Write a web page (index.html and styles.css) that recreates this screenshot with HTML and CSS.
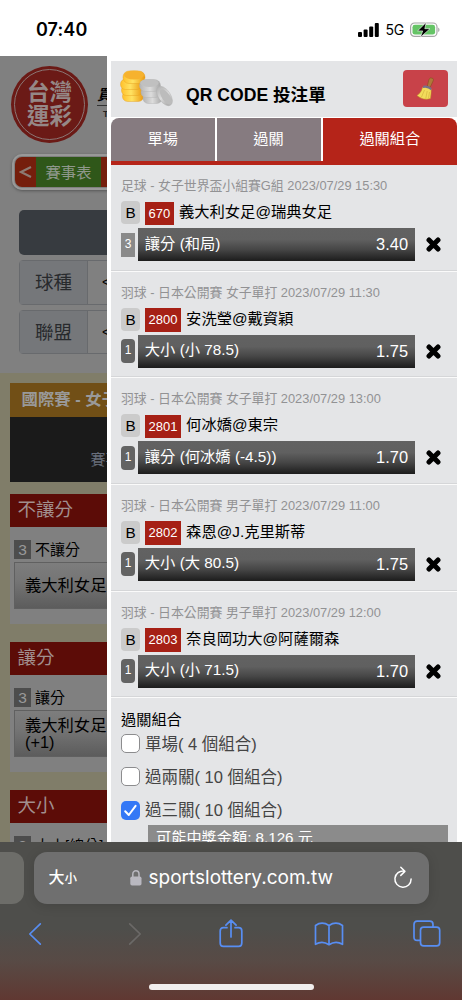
FILE: index.html
```html
<!DOCTYPE html>
<html lang="zh-Hant">
<head>
<meta charset="utf-8">
<title>QR CODE 投注單</title>
<link rel="stylesheet" href="styles.css">
</head>
<body>
<div class="phone">
  <header class="status">
    <span class="time">07:40</span>
    <span class="status-right">
      <svg class="signal" width="21" height="14" viewBox="0 0 21 14"><rect x="0" y="9" width="4" height="5" rx="1"/><rect x="5.6" y="6.4" width="4" height="7.6" rx="1"/><rect x="11.2" y="3.4" width="4" height="10.6" rx="1"/><rect x="16.8" y="0" width="4" height="14" rx="1"/></svg>
      <span class="net">5G</span>
      <svg class="battery" width="30" height="16" viewBox="0 0 30 16"><rect x=".6" y="1" width="26.4" height="13.4" rx="4" fill="#fff" stroke="#a6a6a6" stroke-width="1.2"/><rect x="2.5" y="2.8" width="22.6" height="9.8" rx="2.4" fill="#65c466"/><path d="M28.2 5.4v4.6q1.3-.6 1.3-2.3t-1.3-2.3z" fill="#a6a6a6"/><path d="M16.2.4 7.6 8.9h5.1L10.4 15.3 20 6.7h-5.2z" fill="#000" stroke="#fff" stroke-width=".6"/></svg>
    </span>
  </header>

  <main class="page">
    <aside class="behind">
      <div class="brand">
        <div class="logo"><div class="logo-ring"><span>台灣</span><span>運彩</span></div></div>
        <div class="tagline"><b>買</b><i>T</i></div>
      </div>
      <div class="nav"><span class="nav-arrow"><svg width="13" height="12" viewBox="0 0 13 12"><path d="M12 1 2 6l10 5" fill="none" stroke="#8c7b73" stroke-width="2.2"/></svg></span><span class="nav-item">賽事表</span><span class="nav-next"></span></div>
      <div class="dark-button"></div>
      <div class="field"><span>球種</span><em>&lt;</em></div>
      <div class="field"><span>聯盟</span><em>&lt;</em></div>
      <div class="games">
        <div class="gold">國際賽 - 女子</div>
        <div class="black">賽事</div>
        <section class="market">
          <h2>不讓分</h2>
          <div class="market-body"><p><b>3</b>不讓分</p><div class="pick">義大利女足</div></div>
        </section>
        <section class="market">
          <h2>讓分</h2>
          <div class="market-body"><p><b>3</b>讓分</p><div class="pick">義大利女足<br>(+1)</div></div>
        </section>
        <section class="market">
          <h2>大小</h2>
          <div class="market-body"><p><b>3</b>大小[總分]</p></div>
        </section>
      </div>
    </aside>

    <div class="slip">
      <div class="slip-head">
        <svg class="coins" width="54" height="40" viewBox="0 0 54 40">
          <defs>
            <linearGradient id="gold" x2="1"><stop offset="0" stop-color="#ffc02a"/><stop offset=".45" stop-color="#ffe262"/><stop offset="1" stop-color="#eb9a12"/></linearGradient>
            <linearGradient id="silver" x2="1"><stop offset="0" stop-color="#b4b4b4"/><stop offset=".5" stop-color="#dcdcdc"/><stop offset="1" stop-color="#a6a6a6"/></linearGradient>
          </defs>
          <g fill="url(#gold)" stroke="#e39c1c" stroke-width=".4">
            <rect x="2.5" y="23" width="21" height="10.5" rx="5"/><rect x="1.5" y="17" width="21" height="10.5" rx="5"/><rect x=".5" y="11" width="21.5" height="10.5" rx="5"/><rect x="3" y="3" width="22" height="12.5" rx="6"/><ellipse cx="14" cy="7" rx="10" ry="4.6" fill="#f6b22e" stroke="none"/>
          </g>
          <g fill="url(#silver)" stroke="#b0b0b0" stroke-width=".4">
            <rect x="23" y="25" width="19" height="10.5" rx="5"/><rect x="21" y="19" width="20" height="10.5" rx="5"/><rect x="19.5" y="11.5" width="21" height="12" rx="6"/><ellipse cx="29.5" cy="15" rx="9.2" ry="4" fill="#c0c0c0" stroke="none"/>
            <ellipse cx="44.5" cy="28" rx="11" ry="6" transform="rotate(56 44.5 28)"/><ellipse cx="46" cy="29" rx="9" ry="4" transform="rotate(56 46 29)" fill="#bcbcbc" stroke="none"/>
          </g>
        </svg>
        <h1>QR CODE 投注單</h1>
        <div class="clear"><svg width="19" height="24" viewBox="0 0 19 24"><path d="M11.3 9 13 2.2q1.4-2.2 3.8-.8 1 1 .4 2.4L14 10.6z" fill="#b0783a" stroke="#7c4a1c" stroke-width=".5"/><path d="M6.5 10.5q4-2.5 8.7 1.8 0 4.5-.8 9.3-7.4 2-13.4-3.1 4.6-3 5.5-8z" fill="#f2dc5b" stroke="#c39b29" stroke-width=".5"/><path d="M7.3 8.8q4.6-1.4 8.3 2.2l-.5 2.3q-4-3.8-8.4-2.2z" fill="#77708a"/><path d="M8.5 13 5.5 20M11.2 14 9.8 21.5M13.5 15l-1 6.3" stroke="#c9a535" stroke-width=".5"/></svg></div>
      </div>
      <nav class="tabs"><span>單場</span><span>過關</span><span class="active">過關組合</span></nav>

      <div class="bets">
        <article class="bet">
          <p class="event">足球 - 女子世界盃小組賽G組 2023/07/29 15:30</p>
          <div class="match"><b class="banker">B</b><span class="code">670</span><span>義大利女足@瑞典女足</span></div>
          <div class="line"><span class="min square">3</span><div class="odds"><span>讓分 (和局)</span><strong>3.40</strong></div><svg class="x" width="15" height="15" viewBox="0 0 15 15"><path d="M3 3l9 9M12 3l-9 9"/></svg></div>
        </article>
        <article class="bet">
          <p class="event">羽球 - 日本公開賽 女子單打 2023/07/29 11:30</p>
          <div class="match"><b class="banker">B</b><span class="code">2800</span><span>安洗瑩@戴資穎</span></div>
          <div class="line"><span class="min">1</span><div class="odds"><span>大小 (小 78.5)</span><strong>1.75</strong></div><svg class="x" width="15" height="15" viewBox="0 0 15 15"><path d="M3 3l9 9M12 3l-9 9"/></svg></div>
        </article>
        <article class="bet">
          <p class="event">羽球 - 日本公開賽 女子單打 2023/07/29 13:00</p>
          <div class="match"><b class="banker">B</b><span class="code">2801</span><span>何冰嬌@東宗</span></div>
          <div class="line"><span class="min">1</span><div class="odds"><span>讓分 (何冰嬌 (-4.5))</span><strong>1.70</strong></div><svg class="x" width="15" height="15" viewBox="0 0 15 15"><path d="M3 3l9 9M12 3l-9 9"/></svg></div>
        </article>
        <article class="bet">
          <p class="event">羽球 - 日本公開賽 男子單打 2023/07/29 11:00</p>
          <div class="match"><b class="banker">B</b><span class="code">2802</span><span>森恩@J.克里斯蒂</span></div>
          <div class="line"><span class="min">1</span><div class="odds"><span>大小 (大 80.5)</span><strong>1.75</strong></div><svg class="x" width="15" height="15" viewBox="0 0 15 15"><path d="M3 3l9 9M12 3l-9 9"/></svg></div>
        </article>
        <article class="bet">
          <p class="event">羽球 - 日本公開賽 男子單打 2023/07/29 12:00</p>
          <div class="match"><b class="banker">B</b><span class="code">2803</span><span>奈良岡功大@阿薩爾森</span></div>
          <div class="line"><span class="min">1</span><div class="odds"><span>大小 (小 71.5)</span><strong>1.70</strong></div><svg class="x" width="15" height="15" viewBox="0 0 15 15"><path d="M3 3l9 9M12 3l-9 9"/></svg></div>
        </article>
      </div>

      <div class="combos">
        <h3>過關組合</h3>
        <div class="combo"><i class="box"></i><span>單場( 4 個組合)</span></div>
        <div class="combo"><i class="box"></i><span>過兩關( 10 個組合)</span></div>
        <div class="combo"><i class="box on"><svg width="19" height="19" viewBox="0 0 19 19"><path d="M4.2 10.2 7.8 14 14.6 4.9" fill="none" stroke="#fff" stroke-width="2" stroke-linecap="round" stroke-linejoin="round"/></svg></i><span>過三關( 10 個組合)</span></div>
        <div class="payout">可能中獎金額: 8,126 元</div>
      </div>
    </div>
  </main>

  <footer class="safari">
    <div class="address-row">
      <div class="prev-tab"></div>
      <div class="address">
        <span class="aa">大<small>小</small></span>
        <span class="url"><svg width="12" height="16" viewBox="0 0 12 16"><rect x=".3" y="6.5" width="11.2" height="9" rx="1.8" fill="#b9b8c0"/><path d="M2.8 7V4.2a3.1 3.4 0 0 1 6.2 0V7" fill="none" stroke="#b9b8c0" stroke-width="1.5"/></svg>sportslottery.com.tw</span>
        <svg class="reload" width="20" height="23" viewBox="0 0 20 23"><path d="M11.3 5.1A8.1 8.1 0 1 0 18.1 13M7.8 1.3l4.1 4.1-4.1 4" fill="none" stroke="#fff" stroke-width="1.5" stroke-linecap="round" stroke-linejoin="round"/></svg>
      </div>
    </div>
    <div class="tools">
      <svg width="14" height="30" viewBox="0 0 14 30"><path d="M12.3 4.8 1.8 15l10.5 10.2"/></svg>
      <svg class="off" width="14" height="30" viewBox="0 0 14 30"><path d="M1.7 4.8 12.2 15 1.7 25.2"/></svg>
      <svg width="24" height="30" viewBox="0 0 24 30"><path d="M8 8.7H4.4Q1.2 8.7 1.2 12v12q0 3.4 3.2 3.4h15.2q3.2 0 3.2-3.4V12q0-3.3-3.2-3.3H16M12 18V1.3M6.9 6.2 12 1.1l5.1 5.1"/></svg>
      <svg width="30" height="30" viewBox="0 0 30 30"><path d="M15 25.7Q8.3 21.2 1.5 25.3V6.5q6.5-4.6 13.5 0 7-4.6 13.5 0v18.8Q21.7 21.2 15 25.7zM15 6.5v19"/></svg>
      <svg width="28" height="30" viewBox="0 0 28 30"><path d="M7.3 21.3H4.2Q1 21.3 1 18.2V5.4q0-3.2 3.2-3.2h12.6Q20 2.2 20 5.4v2.7"/><rect x="7.5" y="8.1" width="19.2" height="18.8" rx="3.2"/></svg>
    </div>
    <div class="home"></div>
  </footer>
</div>
</body>
</html>
```
FILE: styles.css
```css
* { box-sizing: border-box; margin: 0; padding: 0; }
body { font-family: "Liberation Sans", "Noto Sans CJK TC", sans-serif; background: #fff; color: #000; }
.phone { width: 462px; height: 1000px; overflow: hidden; display: grid; grid-template-rows: 56px 786px 158px; }

.status { display: flex; justify-content: space-between; padding: 3px 22px 0 36px; align-items: center; font-family: Inter, sans-serif; }
.time { font-size: 18px; font-weight: 600; letter-spacing: .1px; }
.status-right { display: flex; align-items: center; gap: 6px; }
.net { font-size: 14px; letter-spacing: -.2px; }

.page { display: grid; grid-template-columns: 107px 355px; overflow: hidden; }
.behind { background: #808080; overflow: hidden; height: 786px; white-space: nowrap; }
.brand { height: 98px; padding: 10px 0 0 11px; display: flex; }
.logo { flex: none; width: 77px; height: 77px; border-radius: 50%; background: #6b1a16; padding: 3px; }
.logo-ring { height: 71px; border: 1.5px solid #8a7674; border-radius: 50%; display: flex; flex-direction: column; align-items: center; justify-content: center; color: #958887; font-size: 22.5px; line-height: 23.5px; font-weight: 700; }
.tagline { flex: none; padding: 20px 0 0 9px; }
.tagline b { display: block; font-size: 15px; line-height: 18px; height: 20px; border-bottom: 1px solid #333; font-style: italic; }
.tagline i { display: block; font: 700 9px/12px "Liberation Sans", sans-serif; padding: 2px 0 0 6px; color: #222; }
.nav { margin-left: 12px; width: 160px; height: 36px; border: 2px solid #999; border-radius: 10px; padding: 1px; display: flex; overflow: hidden; box-shadow: 0 1px 3px #555; }
.nav-arrow { width: 21px; background: #751e0c; border-radius: 7px 0 0 7px; display: grid; place-items: center; }
.nav-item { width: 65px; background: #2f5719; color: #8f988c; font-size: 15.3px; display: grid; place-items: center; padding-bottom: 3px; }
.nav-next { flex: 1; background: #751e0c; }
.dark-button { margin: 20px 0 0 19px; width: 200px; height: 45px; border-radius: 5px; background: #373b40; }
.field { margin: 5px 0 0 19px; width: 200px; height: 44.5px; border: 1px solid #686a6d; border-radius: 4px; display: flex; align-items: center; }
.field span { width: 68px; height: 100%; display: grid; place-items: center; background: #75777a; border-right: 1px solid #686a6d; font-size: 18.5px; color: #282a2d; padding-bottom: 2px; }
.field em { font-style: normal; font-size: 14px; padding-left: 14px; }
.games { margin-top: 19px; padding: 10px 0 0 9.5px; background: #807d69; }
.gold { height: 34px; background: #714f16; color: #999; font-size: 16.4px; font-weight: 700; line-height: 33px; padding-left: 12px; }
.black { height: 64.5px; background: #1a1a1a; color: #686e7b; font-size: 15px; line-height: 22px; padding: 32px 0 0 81px; margin-bottom: 12px; }
.market { height: 148px; }
.market h2 { background: #5c0c07; height: 33px; line-height: 31px; padding-left: 8px; font-size: 18.5px; font-weight: 400; color: #a18f8e; }
.market-body { height: 97px; padding: 13px 0 0 4.5px; background: #808080; }
.market-body p { display: flex; align-items: center; height: 19px; line-height: 17px; gap: 4px; font-size: 15px; }
.market-body p b { width: 17px; height: 19px; background: #4d4d4d; color: #999; font-weight: 400; font-size: 15.5px; line-height: 19px; text-align: center; }
.pick { margin-top: 3.5px; height: 47px; width: 200px; border: 1.5px solid #606060; background: linear-gradient(#7d7d7d, #757575 40%, #5c5c5c); padding-left: 10px; font-size: 16.3px; line-height: 17px; display: flex; align-items: center; }

.slip { background: #fff; padding: 4.5px 5px 0 4px; overflow: hidden; height: 786px; white-space: nowrap; }
.slip-head { height: 56px; background: #e4e5e7; display: flex; padding-left: 9px; }
.coins { margin-top: 7px; }
.slip-head h1 { font-size: 17.6px; line-height: 26px; margin: 21px 0 0 12px; }
.clear { margin: 9.5px 9px 0 auto; width: 45px; height: 37px; border-radius: 4px; background: #c84249; display: grid; place-items: center; }
.tabs { margin-top: 1.5px; height: 47px; display: grid; grid-template-columns: 103.5px 104px 1fr; gap: 2px; border-bottom: 4.5px solid #b52419; border-radius: 8px 8px 0 0; overflow: hidden; }
.tabs span { background: #867b80; color: #fff; font-size: 15.2px; line-height: 41px; text-align: center; }
.tabs .active { background: #b52419; }

.bet { height: 106.65px; background: #e4e5e7; border-bottom: 1.5px solid #fafafa; box-shadow: inset 0 -1px #d5d6d8; padding: 11px 10px 0; }
.event { font-size: 12.85px; line-height: 19px; height: 25px; color: #929294; }
.match { display: flex; height: 27px; font-size: 15.3px; line-height: 22px; }
.banker { width: 19px; height: 23px; border-radius: 4px; background: #cbcbcb; font-weight: 400; text-align: center; line-height: 23px; margin-right: 5px; }
.code { height: 23.5px; margin: .5px 5px 0 0; background: #a62015; color: #fff; font-size: 13px; line-height: 23px; padding: 0 3.6px; }
.line { display: flex; align-items: center; height: 33px; }
.min { width: 14px; height: 24px; border-radius: 4px; background: #636363; color: #fff; text-align: center; font-size: 12px; line-height: 23px; margin-right: 2.5px; }
.square { border-radius: 0; background: #8a8a8a; }
.odds { width: 277.5px; height: 33px; background: linear-gradient(#626262 0, #606060 35%, #464646 65%, #1c1c1c); color: #fff; display: flex; align-items: center; justify-content: space-between; padding: 0 7px 0 7.3px; font-size: 15.3px; }
.odds > span { line-height: 22px; margin-top: -2px; }
.odds strong { font-weight: 400; font-size: 16.4px; }
.x { margin-left: 11px; stroke: #000; stroke-width: 5; stroke-linecap: round; }

.combos { background: #e4e5e7; padding: 12px 9px 0 10px; height: 160px; }
.combos h3 { font-size: 15.2px; font-weight: 400; line-height: 20px; height: 24px; }
.combo { display: flex; align-items: center; gap: 5px; height: 19px; margin-bottom: 14.2px; font-size: 16.5px; line-height: 19px; color: #444; }
.combo span { padding-top: 1px; }
.box { flex: none; width: 19px; height: 19px; border: 1.5px solid #8c8c8e; border-radius: 5px; background: #fff; }
.on { border: 0; background: #3478f6; }
.on svg { display: block; }
.payout { margin: -9px 0 0 27px; height: 40px; background: #8b8b8b; color: #fff; font-size: 15.2px; line-height: 25px; padding-left: 8px; }

.safari { background: linear-gradient(#4e4e4b 0, #4e4e4b 55%, #584a45 76%, #603832 100%); padding-top: 9.5px; overflow: hidden; }
.address-row { display: flex; gap: 10px; height: 52px; }
.prev-tab { width: 23.5px; background: #6d6d69; border-radius: 0 12px 12px 0; }
.address { width: 395px; background: #6f6f6f; border-radius: 13px; display: flex; align-items: center; padding: 0 16px 0 15px; color: #fff; box-shadow: 0 2px 12px #0002; }
.aa { font-size: 16px; font-weight: 500; width: 81px; line-height: 24px; padding-top: 2px; }
.aa small { font-size: 12.5px; }
.url { display: flex; align-items: center; gap: 7px; font: 19px/24px Inter, sans-serif; flex: 1; }
.tools { display: grid; grid-template-columns: repeat(5, 98px); place-items: center; height: 30px; margin: 15px 0 0 -14.5px; }
.tools svg { fill: none; stroke: #588ef3; stroke-width: 1.7; stroke-linecap: round; stroke-linejoin: round; }
.tools .off { stroke: #6b6967; margin-left: 4px; }
.home { width: 165px; height: 6px; border-radius: 3px; background: #f1eeed; margin: 35px auto 0; }
```
